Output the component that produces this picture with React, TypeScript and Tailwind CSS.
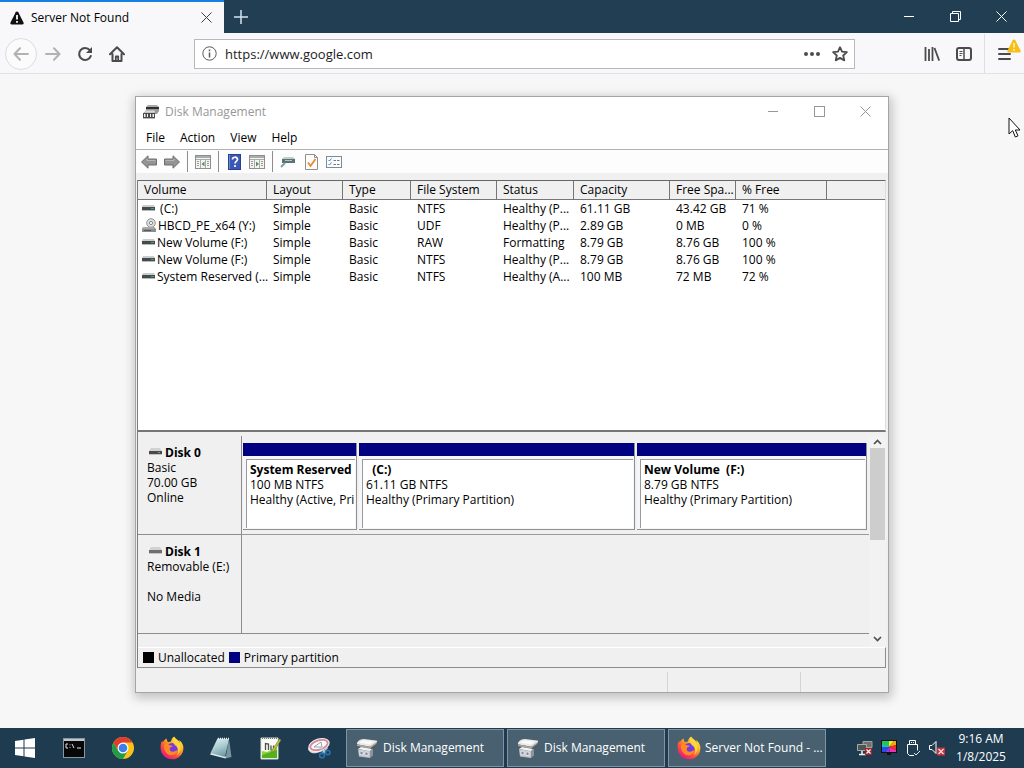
import React, { type ReactNode } from "react";

const columns = ["Volume", "Layout", "Type", "File System", "Status", "Capacity", "Free Spa...", "% Free"];

type Volume = { optical?: boolean; cells: string[] };

const volumes: Volume[] = [
  { cells: ["\u00a0(C:)", "Simple", "Basic", "NTFS", "Healthy (P...", "61.11 GB", "43.42 GB", "71 %"] },
  { optical: true, cells: ["HBCD_PE_x64 (Y:)", "Simple", "Basic", "UDF", "Healthy (P...", "2.89 GB", "0 MB", "0 %"] },
  { cells: ["New Volume (F:)", "Simple", "Basic", "RAW", "Formatting", "8.79 GB", "8.76 GB", "100 %"] },
  { cells: ["New Volume (F:)", "Simple", "Basic", "NTFS", "Healthy (P...", "8.79 GB", "8.76 GB", "100 %"] },
  { cells: ["System Reserved (...", "Simple", "Basic", "NTFS", "Healthy (A...", "100 MB", "72 MB", "72 %"] },
];

const partitions = [
  { name: "System Reserved", size: "100 MB NTFS", state: "Healthy (Active, Pri" },
  { name: "\u00a0 (C:)", size: "61.11 GB NTFS", state: "Healthy (Primary Partition)" },
  { name: "New Volume\u00a0 (F:)", size: "8.79 GB NTFS", state: "Healthy (Primary Partition)" },
];

function DriveIcon() {
  return (
    <svg width="13" height="7" viewBox="0 0 13 7" className="shrink-0">
      <path d="M1 0h11l1 2H0z" fill="#c9cdcc" />
      <rect y="2" width="13" height="3" fill="#454b4b" />
      <path d="M0 5.500h13" stroke="#b5baba" />
      <path d="M9 3.500h3" stroke="#3fa39a" />
    </svg>
  );
}

function OpticalIcon() {
  return (
    <svg width="14" height="15" viewBox="0 0 14 15" className="shrink-0">
      <circle cx="9" cy="5" r="4.3" fill="#e0e0e2" stroke="#909093" />
      <circle cx="9" cy="5" r="1.6" fill="#fff" stroke="#87878b" />
      <path d="M1 9h11l2 2v3H0v-3z" fill="#8b8d8e" />
      <path d="M1 10h11" stroke="#c4c6c7" />
      <path d="M2 12.5h7" stroke="#56595a" />
    </svg>
  );
}

function DiskIcon({ plain = false }: { plain?: boolean }) {
  return (
    <svg width="13" height="8" viewBox="0 0 13 8" className="mb-[2px] shrink-0">
      <path d="M2 0h9l2 3H0z" fill="#d2d2d2" />
      <rect y="3" width="13" height="3" fill={plain ? "#6e6e6e" : "#4a4a4a"} />
      <path d="M0 6.500h13" stroke="#c4c4c4" />
      {!plain && <path d="M9 4.500h2" stroke="#78a598" />}
    </svg>
  );
}

function DiskMgmtSmall() {
  return (
    <svg width="16" height="16" viewBox="0 0 16 16">
      <path d="M5 1h9l2 2H3z" fill="#a9a9a9" />
      <path d="M3 3h13v2.500H3z" fill="#2f2f2f" />
      <path d="M12 5.500h4v1.500l-2 3h-2z" fill="#9a9a9a" />
      <path d="M1 9l2-2.500h9V9z" fill="#d9d9d9" stroke="#9b9b9b" strokeWidth=".6" />
      <path d="M0 9h12v5H0z" fill="#4a4a4a" />
      <path d="M1 10h1.500v3H1zM4 10h1v3H4zM7 10h1v3H7zM9.500 10H11v3H9.500z" fill="#f1f1f1" />
      <path d="M0 14.500h12" stroke="#b9b9b9" />
    </svg>
  );
}

function DiskMgmtLarge() {
  return (
    <svg width="24" height="24" viewBox="0 0 24 24" className="shrink-0">
      <path d="M2 7l7 3 7 1 6-5v2l-6 6v3L6 12l-4-2z" fill="#55595a" />
      <path d="M2 7C3 4.500 6 3 9 3l12 1.500c1.500.3 1.500 1.300.5 2L17 10c-1 .7-2 .8-3 .6L3 8.500C2 8.300 1.700 7.800 2 7z" fill="#e9e8e4" />
      <path d="M4 6.800C6 4.800 8 4.300 10 4.400l9 1.200-4 3z" fill="#fafaf8" />
      <path d="M2 8.300l12.500 2.500 7-4.500v1.500L15 12.500 2 10z" fill="#a6a8a8" />
      <path d="M3 13l3-2 11 2-2 2.500z" fill="#f2f2f1" />
      <path d="M3 13l12 2v7L4 20.500z" fill="#c0c5ca" />
      <path d="M15 15l3-2.500v7L15 22z" fill="#8d949b" />
      <path d="M5 15l3 .5v3.500l-3-.5zM10 15.800l3 .5v3.500l-3-.5z" fill="#7d8b9b" stroke="#f2f4f5" strokeWidth=".8" />
    </svg>
  );
}

function FirefoxIcon() {
  return (
    <svg width="24" height="24" viewBox="0 0 24 24" className="shrink-0">
      <defs>
        <linearGradient id="fox" x1=".85" y1=".05" x2=".2" y2=".95">
          <stop offset="0" stopColor="#fff04a" />
          <stop offset=".35" stopColor="#ffae22" />
          <stop offset=".65" stopColor="#ff523b" />
          <stop offset="1" stopColor="#e31587" />
        </linearGradient>
      </defs>
      <path d="M22.600 8.500c-.7-2-2.300-3.700-3.600-4.400.5 1 .8 1.900 1 2.700C18.300 3.600 15.200 3 14.200.6c-2 1.200-2.900 3-3.200 4.800-1 .1-1.900.4-2.700.8C7 5.200 6.800 3.500 6.700 2.400 4.800 3.300 3.500 5 2.700 6.500c-.3-.4-.4-1.400-.4-2C.8 6.800.5 9.500.6 12.300 1 18.700 6 23.300 12 23.300c6.300 0 11.400-5 11.400-11.400 0-1.200-.3-2.400-.8-3.400z" fill="url(#fox)" />
      <circle cx="12" cy="12.700" r="5.700" fill="#743be0" />
      <path d="M4 9.200c2.200-2 4.500-1.200 5.500.1 1.100-.1 2.100.1 3.200.8-.4 1-2.600 1.200-3 2.300-.3 2.200 1.500 3.600 3.500 3.300 1.900-.3 2.700-1.700 4.200-1.100-.7 3.500-4.100 5.300-7.200 4.500C6.500 18.200 3.700 14.500 4 9.200z" fill="#ff8a24" />
      <path d="M14.200 1c1.200 3 5.800 4.800 6.400 10.600.3 3.600-1.900 6.700-4.200 8 3-3.600 2-7.900-.5-9.700-2.700-1.900-3.700-4.900-1.700-8.900z" fill="#ffdc3e" opacity=".85" />
    </svg>
  );
}

function ChromeIcon() {
  return (
    <svg width="24" height="24" viewBox="0 0 24 24">
      <circle cx="12" cy="12" r="11" fill="#fbc116" />
      <path d="M2.470 6.500A11 11 0 0 1 21.530 6.500H12L7.240 14.750z" fill="#e33b2e" />
      <path d="M2.470 6.500A11 11 0 0 0 12 23l4.760-8.250H7.240z" fill="#229a4b" />
      <circle cx="12" cy="12" r="5.500" fill="#fff" />
      <circle cx="12" cy="12" r="4.300" fill="#3d7ee8" />
    </svg>
  );
}

function WindowsIcon() {
  return (
    <svg width="20" height="20" viewBox="0 0 20 20" fill="#fff">
      <path d="M0 3l8.500-1.200v7.700H0zM9.500 1.600L20 0v9.500H9.500zM0 10.500h8.500v7.700L0 17zM9.500 10.500H20V20L9.500 18.400z" />
    </svg>
  );
}

function TerminalIcon() {
  return (
    <svg width="22" height="20" viewBox="0 0 22 20">
      <rect x=".5" y=".5" width="21" height="19" fill="#080808" stroke="#8b979e" />
      <path d="M1 2h20" stroke="#bcc8ce" strokeWidth="2" />
      <path d="M3 6v4M3 6h2M3 10h2M7 6.500v.8M7 9v.8M9 6l2 4M14 10h4" stroke="#e5e5e5" fill="none" />
    </svg>
  );
}

function NotebookIcon() {
  return (
    <svg width="24" height="24" viewBox="0 0 24 24">
      <defs>
        <linearGradient id="cover" x1=".2" y1="0" x2=".6" y2="1">
          <stop offset="0" stopColor="#ddeef0" />
          <stop offset=".5" stopColor="#a9cbd1" />
          <stop offset="1" stopColor="#6d99a3" />
        </linearGradient>
      </defs>
      <path d="M20 3l2.500 18-6 1.500z" fill="#7c949b" />
      <path d="M1 18.500l15.500 4 .5-2L3 15.500z" fill="#e3ebec" />
      <path d="M8.500 2.500L20 3l-4 18L1.500 17z" fill="url(#cover)" />
      <path d="M9 2.500h11" stroke="#ecf4f4" strokeDasharray="1 1" strokeWidth="1.500" />
    </svg>
  );
}

function NotepadPlusIcon() {
  return (
    <svg width="24" height="24" viewBox="0 0 24 24">
      <path d="M3 2h17v21H3z" fill="#fafbf7" stroke="#d5dcd0" />
      <path d="M4 2.500h15" stroke="#6c7769" strokeDasharray="1 1" />
      <path d="M4 15l5 1 10-5v11H4z" fill="#8fd53a" />
      <path d="M4 19l15-5v8H4z" fill="#55b01f" />
      <path d="M7.500 14V7.500l3 .5v6M13 9.500v4.500M15.500 9.500v3" fill="none" stroke="#4a5446" strokeWidth="1.300" />
      <path d="M14 14l7.500-11 1.500 1-7 11-2.500 1.500z" fill="#c3c93a" stroke="#6b6f2a" strokeWidth=".6" />
    </svg>
  );
}

function ScissorsIcon() {
  return (
    <svg width="24" height="24" viewBox="0 0 24 24">
      <path d="M1 12c0 4 4 6 9 5l6-2-3-3z" fill="#d9dbe0" />
      <ellipse cx="12" cy="9" rx="11" ry="6.500" transform="rotate(-18 12 9)" fill="#f4eff2" />
      <ellipse cx="12" cy="9" rx="9" ry="4.600" transform="rotate(-18 12 9)" fill="#fdfdfe" stroke="#dc8794" strokeWidth="1.800" />
      <path d="M7 11l7-5 1 5z" fill="#fff" stroke="#8fa3ad" />
      <path d="M13.500 11l5 6.500M20.500 11.500L14.500 18" stroke="#b7cbd9" strokeWidth="1.500" />
      <circle cx="15" cy="19.500" r="2.300" fill="none" stroke="#276fa4" strokeWidth="1.800" />
      <circle cx="20.800" cy="16.500" r="2.200" fill="none" stroke="#276fa4" strokeWidth="1.800" />
    </svg>
  );
}

function WarningIcon({ fill, mark, className }: { fill: string; mark: string; className?: string }) {
  return (
    <svg width="14" height="14" viewBox="0 0 14 14" className={className}>
      <path d="M7 .5c.6 0 1 .3 1.300.8l5.200 10.200c.5 1-.1 2-1.200 2H1.700c-1.100 0-1.700-1-1.200-2L5.700 1.300C6 .8 6.400.5 7 .5z" fill={fill} />
      <path d="M7 4v4.500M7 10v1.800" stroke={mark} strokeWidth="1.800" />
    </svg>
  );
}

function CloseGlyph() {
  return (
    <svg width="11" height="11" viewBox="0 0 11 11" fill="none" stroke="currentColor">
      <path d="M.5.5l10 10M10.500.5l-10 10" />
    </svg>
  );
}

function MinimizeGlyph() {
  return (
    <svg width="10" height="10" viewBox="0 0 10 10" stroke="currentColor">
      <path d="M0 4.500h10" />
    </svg>
  );
}

function CaptionButton({ label, children }: { label: string; children: ReactNode }) {
  return (
    <button type="button" aria-label={label} className="flex w-[46px] items-center justify-center">
      {children}
    </button>
  );
}

function NavButton({ label, children }: { label: string; children: ReactNode }) {
  return (
    <button type="button" aria-label={label} className="flex size-8 shrink-0 items-center justify-center text-[#4b4b4d]">
      {children}
    </button>
  );
}

function ToolButton({ label, children }: { label: string; children: ReactNode }) {
  return (
    <button type="button" aria-label={label} className="flex size-4 items-center justify-center">
      {children}
    </button>
  );
}

function ToolSeparator() {
  return <span className="h-[21px] w-px bg-[#8d8d8d]" />;
}

function PaneIcon({ flip = false }: { flip?: boolean }) {
  return (
    <svg width="16" height="14" viewBox="0 0 16 14">
      <rect x=".5" y=".5" width="15" height="13" fill="#f4f4f2" stroke="#8c8f90" />
      <path d="M1 2h14" stroke="#a9adae" strokeWidth="2" />
      <path d="M1 4.500h14M5.500 5v8M10.500 5v8" stroke="#a9acad" />
      <path d="M2 6.500h2M2 8.500h2M2 10.500h2M12 6.500h2M12 8.500h2M12 10.500h2" stroke="#999" />
      <path d={flip ? "M7 6.500l3 2.500-3 2.500z" : "M9.500 6.500l-3 2.500 3 2.500z"} fill="#569063" />
    </svg>
  );
}

function ArrowIcon({ flip = false }: { flip?: boolean }) {
  return (
    <svg width="16" height="14" viewBox="0 0 16 14">
      <path d={flip ? "M15.500 7L9 .8V4H.5v6H9v3.200z" : "M.5 7L7 .8V4h8.500v6H7v3.200z"} fill="#949494" stroke="#6e6e6e" />
      <path d={flip ? "M1.500 5.500h8.500V3.500" : "M14.500 5.500H6V3.500"} stroke="#b5b5b5" fill="none" />
    </svg>
  );
}

function BrowserChrome() {
  return (
    <header className="shrink-0">
      <div className="flex h-[33px] bg-[#213e52] text-white">
        <div className="flex w-56 items-center border-t-2 border-[#1480e2] bg-[#f8f8fa] pl-[10px] text-black">
          <WarningIcon fill="#111" mark="#fff" />
          <span className="ml-[7px] flex-1">Server Not Found</span>
          <button type="button" aria-label="Close tab" className="flex h-8 w-9 items-center justify-center text-[#3c3c3e]">
            <CloseGlyph />
          </button>
        </div>
        <button type="button" aria-label="New tab" className="flex w-[34px] items-center justify-center">
          <svg width="14" height="14" viewBox="0 0 14 14" stroke="#d6e5f0" strokeWidth="1.500">
            <path d="M7 0v14M0 7h14" />
          </svg>
        </button>
        <div className="ml-auto flex">
          <CaptionButton label="Minimize browser">
            <MinimizeGlyph />
          </CaptionButton>
          <CaptionButton label="Restore browser">
            <svg width="11" height="11" viewBox="0 0 11 11" fill="none" stroke="currentColor">
              <path d="M.5 2.500h8v8h-8zM2.500 2.500v-2h8v8h-2" />
            </svg>
          </CaptionButton>
          <CaptionButton label="Close browser">
            <CloseGlyph />
          </CaptionButton>
        </div>
      </div>
      <nav className="flex h-[41px] items-center border-b border-[#e2e2e4] bg-[#f8f8fa] pt-px pl-[5px]">
        <button type="button" aria-label="Back" className="flex size-8 shrink-0 items-center justify-center rounded-full border border-[#dcdcde] bg-[#fbfbfc]">
          <svg width="16" height="14" viewBox="0 0 16 14" fill="none" stroke="#b2b2b3" strokeWidth="2" strokeLinecap="round" strokeLinejoin="round">
            <path d="M15 7H1.500M7 1.300L1.500 7 7 12.700" />
          </svg>
        </button>
        <NavButton label="Forward">
          <svg width="16" height="14" viewBox="0 0 16 14" fill="none" stroke="#b2b2b3" strokeWidth="2" strokeLinecap="round" strokeLinejoin="round">
            <path d="M1 7h13.500M9 1.300L14.500 7 9 12.700" />
          </svg>
        </NavButton>
        <NavButton label="Reload">
          <svg width="16" height="16" viewBox="0 0 16 16" fill="none" stroke="currentColor" strokeWidth="2.100" strokeLinecap="round">
            <path d="M12.800 4.200A6 6 0 1 0 13.800 10" />
            <path d="M15 1v6H9z" fill="currentColor" stroke="none" />
          </svg>
        </NavButton>
        <NavButton label="Home">
          <svg width="16" height="16" viewBox="0 0 16 16" fill="none" stroke="currentColor" strokeWidth="2" strokeLinecap="round" strokeLinejoin="round">
            <path d="M1 8.200L8 1.200l7 7M3.500 8v7h9V8" />
            <path d="M6.800 15v-4.500h2.400V15" strokeWidth="1.800" />
          </svg>
        </NavButton>
        <div className="mx-[61px] flex h-[30px] flex-1 items-center border border-[#b9b9bb] bg-white pl-[7px]">
          <svg width="15" height="15" viewBox="0 0 15 15" fill="none" stroke="#5b5b5d" className="shrink-0">
            <circle cx="7.500" cy="7.500" r="6.700" />
            <path d="M7.500 6.500v5M7.500 3.500v1.700" strokeWidth="1.500" />
          </svg>
          <input aria-label="Address" defaultValue="https://www.google.com" className="ml-2 min-w-0 flex-1 bg-transparent text-[13px] text-[#1c1c1e] outline-none" />
          <button type="button" aria-label="Page actions" className="flex h-7 w-7 items-center justify-center">
            <svg width="16" height="4" viewBox="0 0 16 4" fill="#4d4d4f">
              <circle cx="2" cy="2" r="2" />
              <circle cx="8" cy="2" r="2" />
              <circle cx="14" cy="2" r="2" />
            </svg>
          </button>
          <button type="button" aria-label="Bookmark page" className="flex h-7 w-7 items-center justify-center">
            <svg width="16" height="16" viewBox="0 0 16 16" fill="none" stroke="#4d4d4f" strokeWidth="1.800" strokeLinejoin="round">
              <path d="M8 1.200l2 4.500 4.900.5-3.700 3.300 1.100 4.900L8 11.900l-4.300 2.500 1.100-4.900L1.100 6.200 6 5.700z" />
            </svg>
          </button>
        </div>
        <NavButton label="Library">
          <svg width="16" height="14" viewBox="0 0 16 14" fill="none" stroke="currentColor" strokeWidth="1.800">
            <path d="M1.500 0v14M5 2v12M8.500 0v14M10.500 1l4.700 12.600" />
          </svg>
        </NavButton>
        <NavButton label="Sidebars">
          <svg width="16" height="14" viewBox="0 0 16 14" fill="none" stroke="currentColor" strokeWidth="2">
            <rect x="1" y="1" width="14" height="12" rx="2" />
            <path d="M8 1v12" strokeWidth="1.500" />
            <path d="M3.500 4.500h3M3.500 6.500h3M3.500 8.500h2" strokeWidth="1" />
          </svg>
        </NavButton>
        <span className="ml-1 h-full w-px bg-[#dfdfe1]" />
        <button type="button" aria-label="Menu" className="relative flex h-full w-[39px] items-center justify-center">
          <svg width="13" height="12" viewBox="0 0 13 12" stroke="#4b4b4d" strokeWidth="2" strokeLinecap="round">
            <path d="M1 1h11M1 6h11M1 11h11" />
          </svg>
          <WarningIcon fill="#f8bd16" mark="#fff2a8" className="absolute top-[5px] right-[3px]" />
        </button>
      </nav>
    </header>
  );
}

function VolumeTable() {
  return (
    <div className="flex-1 border-t border-r border-b-2 border-t-[#666] border-r-[#ddd] border-b-[#767676] bg-white">
      <table className="w-full table-fixed border-separate border-spacing-0 text-left">
        <colgroup>
          <col className="w-[129px]" />
          <col className="w-[76px]" />
          <col className="w-[68px]" />
          <col className="w-[86px]" />
          <col className="w-[77px]" />
          <col className="w-[96px]" />
          <col className="w-[66px]" />
          <col className="w-[91px]" />
          <col />
        </colgroup>
        <thead>
          <tr className="h-[19px] bg-[#f0f0f0]">
            {columns.map((name) => (
              <th key={name} scope="col" className="border-r border-b border-[#767676] py-0 pl-[6px] leading-[18px] font-normal whitespace-nowrap">
                {name}
              </th>
            ))}
            <td className="border-b border-[#767676] p-0" />
          </tr>
        </thead>
        <tbody>
          {volumes.map((volume, i) => (
            <tr key={i} className="h-[17px]">
              {volume.cells.map((cell, j) => (
                <td key={j} className={j === 0 ? "p-0 pl-1 leading-[17px] whitespace-nowrap" : "p-0 pl-[6px] leading-[17px] whitespace-nowrap"}>
                  {j === 0 ? (
                    <span className="flex h-[17px] items-center gap-[2px]">
                      {volume.optical ? <OpticalIcon /> : <DriveIcon />}
                      {cell}
                    </span>
                  ) : (
                    cell
                  )}
                </td>
              ))}
              <td />
            </tr>
          ))}
        </tbody>
      </table>
    </div>
  );
}

function DiskLabel({ name, plain, lines }: { name: string; plain?: boolean; lines: string[] }) {
  return (
    <div className="w-[104px] shrink-0 border-r border-b border-[#8c8c8c] pt-[9px] pl-[9px] leading-[15px]">
      <div className="flex items-center gap-[3px] pl-[2px] font-bold">
        <DiskIcon plain={plain} />
        {name}
      </div>
      {lines.map((line, i) => (
        <div key={i} className="h-[15px] whitespace-nowrap">
          {line}
        </div>
      ))}
    </div>
  );
}

function DiskMap() {
  return (
    <div className="flex h-[215px] shrink-0 pt-[4px]">
      <div className="flex min-w-0 flex-1 flex-col">
        <section aria-label="Disk 0" className="flex h-[99px]">
          <DiskLabel name="Disk 0" lines={["Basic", "70.00 GB", "Online"]} />
          <div className="min-w-0 flex-1 border-b border-[#9a9a9a] pt-[7px] pr-[2px] pb-[4px] pl-px">
            <div className="grid h-full grid-cols-[114fr_276fr_230fr] gap-[2px]">
              {partitions.map((part) => (
                <div key={part.name} className="flex min-w-0 flex-col border-r border-b border-[#8f8f8f] bg-[#f4f6fa]">
                  <div className="h-[13px] bg-[#000080]" />
                  <div className="mt-[3px] mr-px mb-px ml-[3px] flex-1 border-t border-l border-[#9a9a9a] bg-white pt-[2px] pl-[3px] leading-[15px] whitespace-nowrap">
                    <div className="font-bold">{part.name}</div>
                    <div>{part.size}</div>
                    <div>{part.state}</div>
                  </div>
                </div>
              ))}
            </div>
          </div>
        </section>
        <section aria-label="Disk 1" className="flex h-[99px]">
          <DiskLabel name="Disk 1" plain lines={["Removable (E:)", "", "No Media"]} />
          <div className="flex-1 border-b border-[#8c8c8c]" />
        </section>
      </div>
      <div className="flex w-[17px] flex-col items-center bg-[#f2f2f2]">
        <button type="button" aria-label="Scroll up" className="flex h-[12px] w-full items-center justify-center">
          <svg width="9" height="6" viewBox="0 0 9 6" fill="none" stroke="#505050" strokeWidth="1.700">
            <path d="M1 5l3.500-3.500L8 5" />
          </svg>
        </button>
        <div className="h-[92px] w-[15px] bg-[#cdcdcd]" />
        <button type="button" aria-label="Scroll down" className="mt-auto mb-[2px] flex h-[12px] w-full items-center justify-center">
          <svg width="9" height="6" viewBox="0 0 9 6" fill="none" stroke="#505050" strokeWidth="1.700">
            <path d="M1 1l3.500 3.500L8 1" />
          </svg>
        </button>
      </div>
    </div>
  );
}

function DiskManagement() {
  return (
    <main className="flex flex-1 flex-col border border-[#a5a5a5] bg-[#f0f0f0] text-black shadow-[1px_3px_10px_2px_rgba(0,0,0,0.22)]">
      <div className="flex h-[29px] shrink-0 bg-white pl-[7px] text-[#979797]">
        <div className="flex flex-1 items-center gap-[6px]">
          <DiskMgmtSmall />
          <h1>Disk Management</h1>
        </div>
        <CaptionButton label="Minimize">
          <MinimizeGlyph />
        </CaptionButton>
        <CaptionButton label="Maximize">
          <svg width="11" height="11" viewBox="0 0 11 11" fill="none" stroke="currentColor">
            <rect x=".5" y=".5" width="10" height="10" />
          </svg>
        </CaptionButton>
        <CaptionButton label="Close">
          <CloseGlyph />
        </CaptionButton>
      </div>
      <div className="flex h-6 shrink-0 items-center border-b border-[#b2b2b2] bg-white pl-[2px]">
        {["File", "Action", "View", "Help"].map((item) => (
          <button key={item} type="button" className="pr-[7px] pl-2">
            {item}
          </button>
        ))}
      </div>
      <div className="flex h-[23px] shrink-0 items-center gap-[7px] bg-[#fdfdfd] pl-[5px]">
        <ToolButton label="Back">
          <ArrowIcon />
        </ToolButton>
        <ToolButton label="Forward">
          <ArrowIcon flip />
        </ToolButton>
        <ToolSeparator />
        <ToolButton label="Show console tree">
          <PaneIcon />
        </ToolButton>
        <ToolSeparator />
        <ToolButton label="Help">
          <svg width="13" height="16" viewBox="0 0 13 16">
            <rect x=".5" y=".5" width="12" height="15" fill="#3b58b5" stroke="#27408f" />
            <path d="M1.500 1v14" stroke="#7288cf" />
            <path d="M4.500 5.500c0-3 5-3 5-.2 0 2-2.500 2-2.500 4.200M7 11v2" fill="none" stroke="#fff" strokeWidth="1.700" />
          </svg>
        </ToolButton>
        <ToolButton label="Show action pane">
          <PaneIcon flip />
        </ToolButton>
        <ToolSeparator />
        <ToolButton label="Refresh">
          <svg width="16" height="14" viewBox="0 0 16 14">
            <path d="M4 2h9l2 2H2z" fill="#c2cccf" />
            <rect x="2" y="4" width="13" height="4" fill="#5c7076" />
            <path d="M5 5.500h7" stroke="#a9c9cd" />
            <path d="M5 8l-4 4" stroke="#7e9fa6" strokeWidth="2" />
          </svg>
        </ToolButton>
        <ToolButton label="Properties">
          <svg width="13" height="16" viewBox="0 0 13 16">
            <path d="M.5.5h9l3 3v12H.5z" fill="#fcfcfa" stroke="#8f8f8f" />
            <path d="M9.500.5v3h3" fill="none" stroke="#8f8f8f" />
            <path d="M3 8.500l2.500 3.500L10.500 5" fill="none" stroke="#e78a32" strokeWidth="1.800" />
          </svg>
        </ToolButton>
        <ToolButton label="View options">
          <svg width="16" height="12" viewBox="0 0 16 12">
            <rect x=".5" y=".5" width="15" height="11" fill="#fbfcfd" stroke="#7d8b95" />
            <path d="M2.500 4l1 1 2-2.500M2.500 8l1 1 2-2.500" stroke="#4b83bb" fill="none" />
            <path d="M7.500 4.500H10M11 4.500h2.500M7.500 8.500H10M11 8.500h2.500" stroke="#7a7a7a" />
          </svg>
        </ToolButton>
      </div>
      <div className="mt-[7px] mr-[2px] ml-px flex flex-1 flex-col border-l border-[#7d7d7d]">
        <VolumeTable />
        <DiskMap />
        <div className="flex h-[21px] shrink-0 items-center border-t border-r border-b border-t-white border-[#8c8c8c] pl-[5px]">
          <span className="size-[11px] bg-black" />
          <span className="ml-1">Unallocated</span>
          <span className="ml-1 size-[11px] bg-[#000080]" />
          <span className="ml-1">Primary partition</span>
        </div>
      </div>
      <footer className="mt-1 flex h-5 shrink-0">
        <div className="flex-1 border-r border-[#d4d4d4]" />
        <div className="w-[133px] border-r border-[#d4d4d4]" />
        <div className="w-[87px]" />
      </footer>
    </main>
  );
}

function TaskButton({ icon, children }: { icon: ReactNode; children: ReactNode }) {
  return (
    <button type="button" className="flex w-[158px] items-center gap-1 border border-[#7f95a3] bg-[#48606f] pl-2 text-left whitespace-nowrap">
      {icon}
      {children}
    </button>
  );
}

function Taskbar() {
  const pinned = [
    { label: "Start", icon: <WindowsIcon /> },
    { label: "Command Prompt", icon: <TerminalIcon /> },
    { label: "Chrome", icon: <ChromeIcon /> },
    { label: "Firefox", icon: <FirefoxIcon /> },
    { label: "Notepad", icon: <NotebookIcon /> },
    { label: "Text editor", icon: <NotepadPlusIcon /> },
    { label: "Snipping tool", icon: <ScissorsIcon /> },
  ];
  return (
    <footer className="flex h-10 shrink-0 bg-[#1e3b4f] text-white">
      <div className="flex gap-px pl-px">
        {pinned.map((app) => (
          <button key={app.label} type="button" aria-label={app.label} className="flex w-12 items-center justify-center">
            {app.icon}
          </button>
        ))}
      </div>
      <div className="ml-[3px] flex gap-[3px] py-px">
        <TaskButton icon={<DiskMgmtLarge />}>Disk Management</TaskButton>
        <TaskButton icon={<DiskMgmtLarge />}>Disk Management</TaskButton>
        <TaskButton icon={<FirefoxIcon />}>Server Not Found - ...</TaskButton>
      </div>
      <div className="ml-auto flex items-center gap-2 pr-[15px]">
        <button type="button" aria-label="Network">
          <svg width="16" height="16" viewBox="0 0 16 16">
            <path d="M6 1.500h9v6H6z" fill="#6e7370" stroke="#a1a39f" />
            <path d="M.5 4.500h9v6h-9z" fill="#4d5552" stroke="#a8aaa5" />
            <path d="M5 11v3M2 14.500h7" stroke="#f3f3f3" strokeWidth="1.500" />
            <path d="M8 8h7v7H8z" fill="#9f2528" />
            <path d="M9.500 9.500l4 4M13.500 9.500l-4 4" stroke="#fff" strokeWidth="1.200" />
          </svg>
        </button>
        <button type="button" aria-label="Display">
          <svg width="16" height="16" viewBox="0 0 16 16">
            <rect width="16" height="13" fill="#111" />
            <path d="M1 1h7v6H1z" fill="#21c55b" />
            <path d="M8 7V1h5z" fill="#f2ee25" />
            <path d="M8 7l5-6h2v4z" fill="#f6a51c" />
            <path d="M8 7l7-2v5z" fill="#f33223" />
            <path d="M8 7l7 3v2H9z" fill="#f32fb0" />
            <path d="M8 7l1 5H4z" fill="#8a3cf0" />
            <path d="M8 7L4 12H1V7z" fill="#294ee6" />
            <path d="M8 7H1V4z" fill="#1fb9d8" />
            <path d="M6 13h4v2H6z" fill="#111" />
          </svg>
        </button>
        <button type="button" aria-label="Removable devices">
          <svg width="16" height="18" viewBox="0 0 16 18" fill="none" stroke="#fff">
            <path d="M4.500 5.500v-4h6v4M9 16.500H4.500l-2-2v-9h10v6M6.500 3v1M8.500 3v1" />
            <path d="M9 14l2 2 4-4" stroke="#dce6eb" />
          </svg>
        </button>
        <button type="button" aria-label="Volume">
          <svg width="16" height="16" viewBox="0 0 16 16" fill="none">
            <path d="M.5 5.500h2.500l4-4v12l-4-4H.5z" stroke="#fff" />
            <path d="M8 7.500h8v8H8z" fill="#c7303c" />
            <path d="M9.500 9l5 5M14.500 9l-5 5" stroke="#ffe0e0" strokeWidth="1.300" />
          </svg>
        </button>
        <div className="w-14 text-center leading-[18px] whitespace-nowrap">
          <div>9:16 AM</div>
          <div>1/8/2025</div>
        </div>
      </div>
    </footer>
  );
}

export default function App() {
  return (
    <div className="relative flex min-h-screen flex-col bg-[#f7f7f8] font-['Open_Sans','Noto_Sans',sans-serif] text-[12px] leading-4">
      <BrowserChrome />
      <div className="flex flex-1 px-[135px] pt-[22px] pb-[35px]">
        <DiskManagement />
      </div>
      <Taskbar />
      <svg width="13" height="21" viewBox="0 0 13 21" className="absolute top-[117px] right-[3px]">
        <path d="M1 1v16l3.700-3.400L7.300 20l2.700-1.200L7.300 13H12z" fill="#fff" stroke="#111" />
      </svg>
    </div>
  );
}
